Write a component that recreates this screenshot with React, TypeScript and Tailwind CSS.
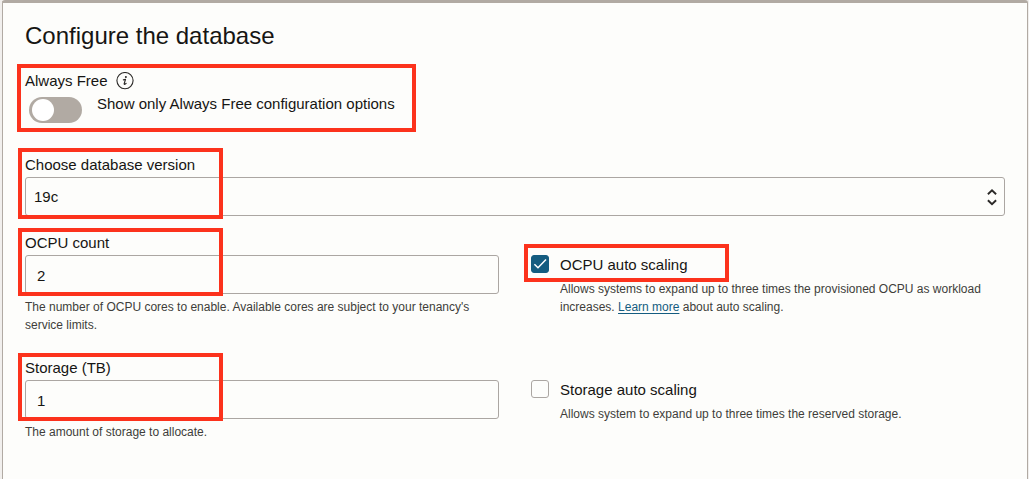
import { useState, type ReactNode } from "react";

function Highlight({ className }: { className: string }) {
  return (
    <div
      aria-hidden="true"
      className={`pointer-events-none absolute border-4 border-[#fc321c] ${className}`}
    />
  );
}

function InfoIcon() {
  return (
    <svg width="18" height="18" viewBox="0 0 18 18" fill="none" aria-hidden="true">
      <circle cx="9" cy="8.6" r="8.1" stroke="#2b2927" strokeWidth="1.1" />
      <circle cx="9.9" cy="5" r="1" fill="#2b2927" />
      <path
        d="M7.4 7.9 9.5 7.4 8.2 11.7c-.2.9.7.8 1.9-.4"
        stroke="#2b2927"
        strokeWidth="1.2"
        strokeLinecap="round"
        strokeLinejoin="round"
      />
    </svg>
  );
}

type NumberFieldProps = {
  id: string;
  label: string;
  initial: string;
  help: string;
};

function NumberField({ id, label, initial, help }: NumberFieldProps) {
  const [value, setValue] = useState(initial);
  return (
    <div className="relative">
      <label htmlFor={id} className="block">
        {label}
      </label>
      <input
        id={id}
        type="text"
        inputMode="numeric"
        value={value}
        onChange={(e) => setValue(e.target.value)}
        aria-describedby={`${id}-help`}
        className="mt-0.5 block h-[39px] w-full rounded-[3px] border border-[#aba6a2] bg-transparent px-[11px] pt-0.5"
      />
      <p id={`${id}-help`} className="mt-1 text-xs leading-[18px] text-[#403d3a]">
        {help}
      </p>
      <Highlight className="-left-[7px] -top-[5px] h-[68px] w-[205px]" />
    </div>
  );
}

type CheckFieldProps = {
  id: string;
  label: string;
  initial: boolean;
  highlighted?: boolean;
  children: ReactNode;
};

function CheckField({ id, label, initial, highlighted, children }: CheckFieldProps) {
  const [checked, setChecked] = useState(initial);
  return (
    <div className="pt-[22px]">
      <div className="relative flex h-5 items-start">
        <span className="relative h-[18px] w-[18px] shrink-0">
          <input
            id={id}
            type="checkbox"
            checked={checked}
            onChange={(e) => setChecked(e.target.checked)}
            className="block h-[18px] w-[18px] appearance-none rounded-[3px] border border-[#aba6a2] checked:border-[#145c80] checked:bg-[#145c80]"
          />
          {checked && (
            <svg
              className="pointer-events-none absolute inset-0"
              width="18"
              height="18"
              viewBox="0 0 18 18"
              fill="none"
              aria-hidden="true"
            >
              <path d="M3.4 9.2 7 12.8 15 4.6" stroke="#fff" strokeWidth="1.5" />
            </svg>
          )}
        </span>
        <label htmlFor={id} className="ml-[11px]">
          {label}
        </label>
        {highlighted && <Highlight className="-left-[7px] -top-[11px] h-[38px] w-[205px]" />}
      </div>
      <p className="ml-[29px] mt-[5px] text-xs leading-[18px] text-[#403d3a]">{children}</p>
    </div>
  );
}

export default function App() {
  const [alwaysFree, setAlwaysFree] = useState(false);
  return (
    <div className="flex min-h-screen flex-col bg-[#f1efed] pl-0.5 pr-px font-['Liberation_Sans',Arial,sans-serif] text-[15px] leading-5 text-[#161513]">
      <main className="grow rounded-t-[3px] border-x border-t-[3px] border-[#b1aaa3] bg-[#fdfdfb] px-[22px] pb-9 pt-[17px]">
        <h1 className="text-2xl leading-8">Configure the database</h1>

        <section className="relative mt-[19px] w-fit">
          <div className="flex items-center gap-2">
            <span>Always Free</span>
            <button type="button" aria-label="About Always Free">
              <InfoIcon />
            </button>
          </div>
          <div className="mt-[3px] flex h-[29px] items-start pl-1">
            <input
              id="always-free"
              type="checkbox"
              role="switch"
              checked={alwaysFree}
              onChange={(e) => setAlwaysFree(e.target.checked)}
              className="mt-[3px] h-[26px] w-[53px] shrink-0 appearance-none rounded-full bg-[#b1aaa3] px-[3px] py-0.5 before:block before:size-[22px] before:rounded-full before:bg-white checked:bg-[#145c80] checked:before:ml-[25px]"
            />
            <label htmlFor="always-free" className="ml-[15px]">
              Show only Always Free configuration options
            </label>
          </div>
          <Highlight className="-left-2 -top-[7px] h-[68px] w-[399px]" />
        </section>

        <section className="relative mt-8">
          <label htmlFor="version" className="block">
            Choose database version
          </label>
          <div className="relative mt-0.5">
            <select
              id="version"
              defaultValue="19c"
              className="block h-[39px] w-full appearance-none rounded-[3px] border border-[#aba6a2] bg-transparent px-2"
            >
              <option>19c</option>
              <option>21c</option>
            </select>
            <svg
              className="pointer-events-none absolute right-2 top-[11px]"
              width="10"
              height="18"
              viewBox="0 0 10 18"
              fill="none"
              stroke="#2b2927"
              strokeWidth="1.9"
              aria-hidden="true"
            >
              <path d="M.9 6.2 5 2.3l4.1 3.9M.9 12.3 5 16.2l4.1-3.9" />
            </svg>
          </div>
          <Highlight className="-left-[7px] -top-[7px] h-[71px] w-[205px]" />
        </section>

        <div className="mt-[17px] grid grid-cols-2 gap-x-8 gap-y-6">
          <NumberField
            id="ocpu-count"
            label="OCPU count"
            initial="2"
            help="The number of OCPU cores to enable. Available cores are subject to your tenancy's service limits."
          />
          <CheckField id="ocpu-scaling" label="OCPU auto scaling" initial highlighted>
            Allows systems to expand up to three times the provisioned OCPU as workload increases.{" "}
            <a href="#auto-scaling" className="text-[#145c80] underline underline-offset-2">
              Learn more
            </a>{" "}
            about auto scaling.
          </CheckField>
          <NumberField
            id="storage"
            label="Storage (TB)"
            initial="1"
            help="The amount of storage to allocate."
          />
          <CheckField id="storage-scaling" label="Storage auto scaling" initial={false}>
            Allows system to expand up to three times the reserved storage.
          </CheckField>
        </div>
      </main>
    </div>
  );
}
